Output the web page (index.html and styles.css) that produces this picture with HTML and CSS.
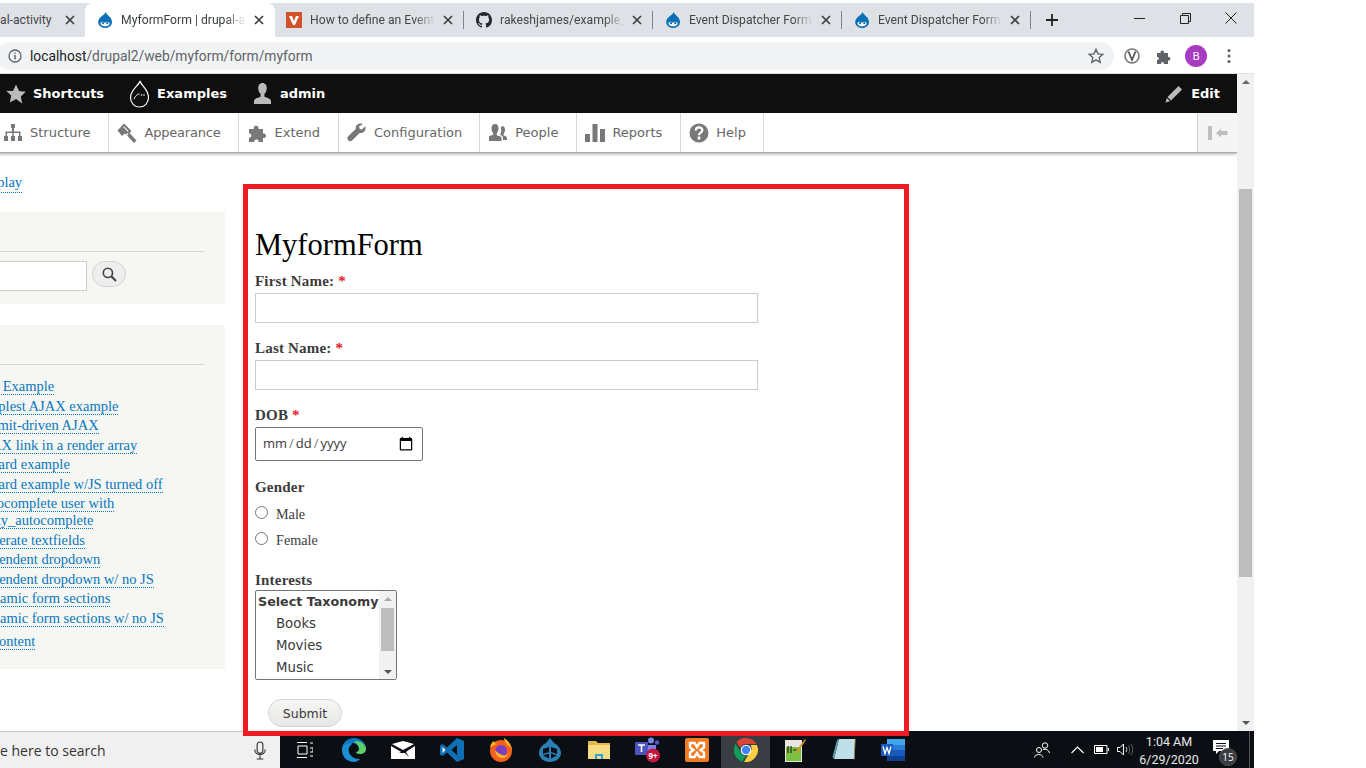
FILE: index.html
```html
<!DOCTYPE html>
<html lang="en">
<head>
  <meta charset="UTF-8" />
  <title>MyformForm | drupal-activity</title>
  <link rel="stylesheet" href="styles.css">
</head>
<body>

  <svg class="defs" width="0" height="0">
    <symbol id="drupal" viewBox="0 0 16 16">
      <path fill="#0d6fb5" d="M8.6 0c.5 2.8 6.4 4.9 6.4 10 0 3.500-3 6-6.800 6S1.200 13.500 1.200 10C1.200 5 8 3 8.600 0z"/>
      <path fill="#fff" d="M3.600 10.800c1-1.300 2.600-1.300 4.400 0 1.700-1.300 3.300-1.400 4.500 0 .6 1.900-1.600 3.600-4.400 3.600s-5-1.700-4.500-3.600z"/>
      <circle cx="6" cy="11.200" r="1.100" fill="#0d6fb5"/>
      <circle cx="10.300" cy="11.200" r="1.100" fill="#0d6fb5"/>
    </symbol>
    <symbol id="close" viewBox="0 0 10 10">
      <path d="M1 1l8 8M9 1l-8 8" stroke="#3c4043" stroke-width="1.700" fill="none"/>
    </symbol>
  </svg>

  <div class="window">

    <!-- Chrome tabs -->
    <div class="tabstrip">
      <div class="tab tab-first">
        <span class="tab-title">al-activity</span>
        <svg class="tab-close"><use href="#close"/></svg>
      </div>
      <div class="tab tab-active">
        <svg class="favicon"><use href="#drupal"/></svg>
        <span class="tab-title">MyformForm | drupal-a</span>
        <svg class="tab-close"><use href="#close"/></svg>
      </div>
      <div class="tab tab-event">
        <svg class="favicon" viewBox="0 0 16 16"><rect width="16" height="16" fill="#d2532a"/><path fill="#fff" d="M3 4h3l2 5 2-5h3l-4 9H7z"/></svg>
        <span class="tab-title">How to define an Event,</span>
        <svg class="tab-close"><use href="#close"/></svg>
      </div>
      <div class="tab">
        <svg class="favicon" viewBox="0 0 16 16"><path fill="#24292e" fill-rule="evenodd" d="M8 0C3.580 0 0 3.580 0 8c0 3.540 2.290 6.530 5.470 7.590.4.070.55-.17.55-.38 0-.19-.01-.82-.01-1.490-2.010.370-2.530-.49-2.690-.94-.09-.23-.48-.94-.82-1.130-.28-.15-.68-.52-.01-.53.63-.01 1.080.58 1.230.82.720 1.210 1.870.870 2.330.66.070-.52.280-.87.510-1.070-1.780-.2-3.640-.89-3.640-3.950 0-.87.310-1.590.820-2.150-.08-.2-.36-1.020.08-2.120 0 0 .67-.21 2.200.82.640-.18 1.320-.27 2-.27s1.360.09 2 .27c1.530-1.040 2.200-.82 2.200-.82.440 1.100.16 1.920.08 2.120.51.560.82 1.270.82 2.150 0 3.070-1.870 3.750-3.650 3.950.29.250.54.730.54 1.480 0 1.070-.01 1.930-.01 2.200 0 .21.150.46.550.38A8.010 8.010 0 0 0 16 8c0-4.420-3.580-8-8-8z"/></svg>
        <span class="tab-title">rakeshjames/example_e</span>
        <svg class="tab-close"><use href="#close"/></svg>
      </div>
      <div class="tab">
        <svg class="favicon"><use href="#drupal"/></svg>
        <span class="tab-title">Event Dispatcher Form |</span>
        <svg class="tab-close"><use href="#close"/></svg>
      </div>
      <div class="tab">
        <svg class="favicon"><use href="#drupal"/></svg>
        <span class="tab-title">Event Dispatcher Form |</span>
        <svg class="tab-close"><use href="#close"/></svg>
      </div>
      <svg class="new-tab" viewBox="0 0 12 12"><path d="M6 0v12M0 6h12" stroke="#202124" stroke-width="1.800"/></svg>
      <div class="win-controls">
        <span class="win-btn"><svg width="11" height="11" viewBox="0 0 11 11"><path d="M0 5.500h11" stroke="#222"/></svg></span>
        <span class="win-btn"><svg width="11" height="11" viewBox="0 0 11 11"><path d="M.5 2.500h8v8h-8zM2.500 2.500v-2h8v8h-2" stroke="#222" fill="none"/></svg></span>
        <span class="win-btn"><svg width="12" height="12" viewBox="0 0 12 12"><path d="M.5.500l11 11M11.500.500l-11 11" stroke="#222" fill="none"/></svg></span>
      </div>
    </div>

    <!-- Address bar -->
    <div class="addressbar">
      <div class="omnibox">
        <svg class="info-icon" viewBox="0 0 14 14"><circle cx="7" cy="7" r="6" fill="none" stroke="#5f6368" stroke-width="1.300"/><path d="M7 6v4.500M7 3.500v1.300" stroke="#5f6368" stroke-width="1.500"/></svg>
        <span class="url"><span class="url-host">localhost</span>/drupal2/web/myform/form/myform</span>
        <svg class="star-icon" viewBox="0 0 16 16"><path d="M8 1.500l2 4.400 4.700.5-3.500 3.200 1 4.700L8 11.900l-4.200 2.400 1-4.700L1.300 6.400 6 5.900z" fill="none" stroke="#5f6368" stroke-width="1.400"/></svg>
      </div>
      <svg class="ext-icon ext-v" viewBox="0 0 16 16"><circle cx="8" cy="8" r="7" fill="none" stroke="#777" stroke-width="1.600"/><path d="M4.500 3.500L8 12l3.500-8.500" fill="none" stroke="#555" stroke-width="1.800"/></svg>
      <svg class="ext-icon ext-puzzle" viewBox="0 0 16 16"><path fill="#5f6368" d="M1 5h3.500c-.8-3 4-3.500 3.500 0H12v4c3-.8 3.500 4 0 3.500V16H8c.5-2.800-3.500-2.800-3 0H1v-4c2.500.5 2.500-3.500 0-3z"/></svg>
      <span class="avatar">B</span>
      <svg class="ext-icon ext-dots" viewBox="0 0 4 16"><circle cx="2" cy="2.500" r="1.500" fill="#5f6368"/><circle cx="2" cy="8" r="1.500" fill="#5f6368"/><circle cx="2" cy="13.500" r="1.500" fill="#5f6368"/></svg>
    </div>

    <div class="browser-body">
      <div class="viewport">

        <!-- Drupal admin toolbar -->
        <div class="toolbar">
          <a class="toolbar-link link-shortcuts"><svg viewBox="0 0 20 20"><path fill="#bbb" d="M10 .5l3 6.500 6.800.8-5 4.700 1.300 6.900L10 15.100l-6.100 3.300 1.300-6.900-5-4.700L7 7z"/></svg>Shortcuts</a>
          <a class="toolbar-link link-examples"><svg viewBox="0 0 20 28"><path fill="none" stroke="#fff" stroke-width="1.200" d="M10.500 1c1 4.500 8.500 8 8.500 16.500 0 5.500-4 9.500-9 9.500s-9-4-9-9.500C1 9.500 9.500 5.500 10.500 1z"/><path fill="none" stroke="#fff" d="M4.500 19c2-4 4-5 5.500-5"/><circle cx="12" cy="15" r=".8" fill="#fff"/><circle cx="14.500" cy="15" r=".8" fill="#fff"/></svg>Examples</a>
          <a class="toolbar-link link-admin"><svg viewBox="0 0 20 22"><path fill="#bbb" d="M10 0c3 0 4.500 2.500 4.500 5.500 0 3-1.300 5-2.500 6v3c2 1 7 1.500 7 5v2.500H1V19.500c0-3.500 5-4 7-5v-3c-1.200-1-2.500-3-2.500-6C5.500 2.500 7 0 10 0z"/></svg>admin</a>
          <a class="toolbar-link link-edit"><svg viewBox="0 0 18 18"><path fill="#bbb" d="M13.500 1l3.500 3.500L6 15.500 2.500 12zM1.800 13L5 16.200.5 17.500z"/></svg>Edit</a>
        </div>

        <!-- Admin menu tray -->
        <div class="tray">
          <a class="tray-item tray-structure"><svg viewBox="0 0 20 20"><path fill="#787878" d="M8 1h4v4h-1v3.500h6.500V13H19v5h-4v-5h1V10h-5.300v3H12v5H8v-5h1.300v-3H4v3h1v5H1v-5h1.500V8.500H9V5H8z"/></svg>Structure</a>
          <a class="tray-item tray-appearance"><svg viewBox="0 0 20 20"><path fill="#787878" d="M7 .5L14.500 8l-3 3-1-1-1.500 1.500-1-1L5 13 .5 7.500zM10 12.500l2.500-2.500 7 7.500-2.500 2.500z"/><path fill="#fff" d="M6.800 3.300l4.800 4.700-.7.700-4.800-4.700z"/></svg>Appearance</a>
          <a class="tray-item tray-extend"><svg viewBox="0 0 20 20"><path fill="#787878" d="M1 6h5c-1.500-4 5.500-4.500 4.500 0H15v4.500c4-1 4 5.500 0 4.500v4h-4.500c.8-3.500-5-3.500-4 0H1v-4.500c3 1 3-5 0-4z"/></svg>Extend</a>
          <a class="tray-item"><svg viewBox="0 0 20 20"><path fill="#787878" d="M13.500.5c-3 0-5.300 2.600-4.800 5.500L1 13.500c-1.200 1.200-.6 2.800.2 3.800.9 1 2.800 1.500 3.900.3l7.500-7.700c3 .6 6-1.700 6-5 0-.7-.1-1.200-.3-1.700L15 6.500 12.800 6 12 3.500 15.800.9c-.7-.3-1.500-.4-2.300-.4z"/></svg>Configuration</a>
          <a class="tray-item tray-wide"><svg viewBox="0 0 20 20"><path fill="#787878" d="M7 1c2.500 0 3.500 2 3.500 4.500 0 2-.8 3.800-1.700 4.700v2c1.500.5 3.700 1 4.700 2V18H1v-4c0-1.500 3.500-1.800 4.200-2.500v-1.300C4.300 9.300 3.500 7.500 3.500 5.500 3.500 3 4.500 1 7 1z"/><path fill="#787878" d="M14 3c2.200 0 3 1.700 3 3.700 0 1.700-.6 3.200-1.400 4v1.800c1.200.4 3.400.8 3.400 2.500v2h-4v-2.500c0-1.500-2-2.300-3-2.700.7-1.300 1.200-2.800 1.200-4.300 0-1-.1-2-.5-3 .2-.3.500-.5.800-.5z"/></svg>People</a>
          <a class="tray-item tray-wide"><svg viewBox="0 0 20 20"><path fill="#787878" d="M0 11h5v8H0zM7.500 1h5v18h-5zM15 6h5v13h-5z"/></svg>Reports</a>
          <a class="tray-item"><svg viewBox="0 0 20 20"><circle cx="10" cy="10" r="9.500" fill="#787878"/><path d="M6.800 7.500c0-4 6.500-4 6.500-.3 0 2.500-3.300 2.500-3.300 5" fill="none" stroke="#fff" stroke-width="2.300"/><path d="M10 13.500v3" stroke="#fff" stroke-width="2.500"/></svg>Help</a>
          <a class="tray-collapse"><svg viewBox="0 0 20 14"><path fill="#bfbfbf" d="M0 0h4v14H0zM8 7l5-4.500V5h6.500v4H13v2.500z"/></svg></a>
        </div>

        <div class="page">
          <aside class="sidebar">
            <a class="display-link" href="#">Display</a>

            <div class="panel panel-search">
              <div class="panel-head"></div>
              <div class="search-row">
                <input class="search-input" type="text">
                <button class="search-btn" type="button"><svg viewBox="0 0 14 14"><circle cx="5.500" cy="5.500" r="4.300" fill="none" stroke="#444" stroke-width="1.500"/><path d="M8.700 8.700l4.300 4.300" stroke="#444" stroke-width="2"/></svg></button>
              </div>
            </div>

            <div class="panel panel-menu">
              <div class="panel-head"></div>
              <ul class="menu">
                <li class="menu-top"><a href="#">AJAX Example</a></li>
                <li><a href="#">Simplest AJAX example</a></li>
                <li><a href="#">Submit-driven AJAX</a></li>
                <li><a href="#">AJAX link in a render array</a></li>
                <li><a href="#">Wizard example</a></li>
                <li><a href="#">Wizard example w/JS turned off</a></li>
                <li><a href="#">Autocomplete user with entity_autocomplete</a></li>
                <li><a href="#">Generate textfields</a></li>
                <li><a href="#">Dependent dropdown</a></li>
                <li><a href="#">Dependent dropdown w/ no JS</a></li>
                <li><a href="#">Dynamic form sections</a></li>
                <li><a href="#">Dynamic form sections w/ no JS</a></li>
                <li class="menu-last"><a href="#">Add content</a></li>
              </ul>
            </div>
          </aside>

          <form class="myform">
            <h1>MyformForm</h1>

            <label class="field-label">First Name: <span class="req">*</span></label>
            <input class="text-input" type="text">

            <label class="field-label">Last Name: <span class="req">*</span></label>
            <input class="text-input" type="text">

            <label class="field-label">DOB <span class="req">*</span></label>
            <input class="date-input" type="date">

            <label class="field-label">Gender</label>
            <div class="radios">
              <label class="radio-row"><input type="radio" name="gender">Male</label>
              <label class="radio-row"><input type="radio" name="gender">Female</label>
            </div>

            <label class="field-label label-interests">Interests</label>
            <div class="taxonomy" role="listbox">
              <div class="taxonomy-rows">
                <div class="taxonomy-group">Select Taxonomy</div>
                <div class="taxonomy-option">Books</div>
                <div class="taxonomy-option">Movies</div>
                <div class="taxonomy-option">Music</div>
              </div>
              <div class="taxonomy-scroll">
                <span class="arrow-up"></span>
                <div class="taxonomy-thumb"></div>
                <span class="arrow-down"></span>
              </div>
            </div>

            <button class="submit-btn" type="button">Submit</button>
          </form>
        </div>
      </div>

      <!-- Page scrollbar -->
      <div class="scrollbar">
        <span class="arrow-up"></span>
        <div class="scroll-track"><div class="scroll-thumb"></div></div>
        <span class="arrow-down"></span>
      </div>
    </div>

    <!-- Windows taskbar -->
    <div class="taskbar">
      <div class="task-search">
        <span class="task-search-text">e here to search</span>
        <svg class="mic" viewBox="0 0 14 20"><rect x="4" y="1" width="6" height="12" rx="3" fill="none" stroke="#333" stroke-width="1.200"/><path d="M1.500 9c0 7 11 7 11 0M7 15v3.500M3.500 19h7" fill="none" stroke="#333" stroke-width="1.200"/></svg>
      </div>

      <span class="task-icon"><svg width="16" height="16" viewBox="0 0 16 16"><path d="M0 .5h10M0 15.500h10M1 4h9v8H1zM13 1h3M13 6h3v4h-3M13 14h3" fill="none" stroke="#fff"/></svg></span>
      <span class="task-icon"><svg width="24" height="24" viewBox="0 0 24 24"><path fill="#0f7ac4" d="M12 0c7 0 12 5 12 11 0 3-3 5-6 5-2 0-4-1-4-2 2 0 3-1 3-3 0-3-3-6-7-6C4 5 0 9 0 12 0 5 5 0 12 0z"/><path fill="#1a8fd6" d="M0 12c0-4 4-7 8-7 3 0 2 1 1 2-2 2-3 4-2 7 1 4 5 7 10 7 1 0 1 .5 0 1-2 1-3 2-5 2C5 24 0 19 0 12z"/><path fill="#5fd068" d="M14 3c5 0 10 4 10 8 0 3-3 5-6 5-2 0-4-1-4-2 2 0 3-1 3-3 0-3-2-6-5-7z"/></svg></span>
      <span class="task-icon"><svg width="24" height="18" viewBox="0 0 24 18"><path fill="#fff" d="M0 5l12 7L24 5v13H0zM1 3L12 0l11 3-11 6z"/><path fill="#0b0f14" d="M8 12l15-7-8 6 3 5-4-4z"/></svg></span>
      <span class="task-icon"><svg width="24" height="24" viewBox="0 0 24 24"><path fill="#0f6eb4" d="M17 0l7 3v18l-7 3L7 14.500 2.500 18 0 16.500v-9L2.500 6 7 9.500zM17 7l-5.500 5 5.500 5z"/><path fill="#fff" d="M2.500 9v6L5.500 12z"/></svg></span>
      <span class="task-icon"><svg width="24" height="24" viewBox="0 0 24 24"><circle cx="12" cy="13" r="11" fill="#f4601e"/><path fill="#ffb726" d="M15 0c5 3 8 8 8 13 0-3-3-6-5-6-1-3-3-4-3-7zM1 10c0-3 2-6 4-7 0 2 2 3 3 3-3 1-6 2-7 4z"/><circle cx="12" cy="13" r="6" fill="#7b3fbf"/><path fill="#ffb726" d="M6 12c0 4 3 8 7 8 3 0 6-2 7-5-2 2-4 3-7 2-3-1-5-3-7-5z"/></svg></span>
      <span class="task-icon"><svg width="22" height="24" viewBox="0 0 22 24"><path fill="#2a7fb5" d="M11 0l4 5c4 2 7 6 7 10 0 5-5 9-11 9S0 20 0 15c0-4 3-8 7-10z"/><path fill="#0b0f14" d="M4 11l6-2v5l-6 2zM12 9l6 2v5l-6-2zM4 17.500l6-2v5zM12 15.500l6 2-6 3z"/></svg></span>
      <span class="task-icon"><svg width="22" height="18" viewBox="0 0 22 18"><path fill="#e0b94a" d="M0 0h8l2 2h12v3H0z"/><path fill="#f6dc82" d="M0 4h22v14H0z"/><path fill="#2aa3dc" d="M7 18v-5h8v5h-2v-3H9v3z"/></svg></span>
      <span class="task-icon"><svg class="teams" width="26" height="26" viewBox="0 0 26 26"><circle cx="16" cy="3.500" r="3" fill="#7b83eb"/><circle cx="22" cy="5.500" r="2.200" fill="#5059c9"/><path fill="#7b83eb" d="M11 8h10v9H11z"/><rect y="5" width="13" height="13" rx="1" fill="#4b53bc"/><path d="M3 8h7M6.500 8v7" stroke="#fff" stroke-width="1.600"/><circle cx="18" cy="18.500" r="7" fill="#c4163f"/><text x="18" y="22" text-anchor="middle" class="teams-badge">9+</text></svg></span>
      <span class="task-icon"><svg width="24" height="24" viewBox="0 0 24 24"><rect width="24" height="24" rx="2" fill="#ee7c25"/><path fill="none" stroke="#fff" stroke-width="2.400" d="M5 5h4.500l2.500 4 2.500-4H19v4.500L15.500 12l3.500 2.500V19h-4.500L12 15l-2.500 4H5v-4.500L8.500 12 5 9.500z"/></svg></span>
      <span class="task-icon task-active"><svg width="24" height="24" viewBox="0 0 24 24"><path fill="#db4437" d="M12 0a12 12 0 0 1 10.400 6H12a6 6 0 0 0-5.700 4L2.500 4A12 12 0 0 1 12 0z"/><path fill="#0f9d58" d="M1.600 5.800l5.300 9A6 6 0 0 0 12 18l-3.700 5.500A12 12 0 0 1 1.600 5.800z"/><path fill="#ffcd40" d="M22.800 7A12 12 0 0 1 10 23.900L15.700 14.500A6 6 0 0 0 16.500 7z"/><circle cx="12" cy="12" r="5.300" fill="#fff"/><circle cx="12" cy="12" r="4.200" fill="#4285f4"/></svg></span>
      <span class="task-icon"><svg width="22" height="24" viewBox="0 0 22 24"><path fill="#e8e8e0" d="M1 2h17v22H1z"/><path fill="#7ac143" d="M2 9h15v14H2z"/><path d="M4 8v7M7 8v7M9 12h5" stroke="#222" stroke-width="1.200"/><path d="M21 1l1 1-9 13-2 1 .5-2.500z" fill="#d99a2b"/></svg></span>
      <span class="task-icon"><svg width="24" height="24" viewBox="0 0 24 24"><path fill="#bfe0e8" d="M7 1h16l-1 20H2z"/><path fill="#5e9fb5" d="M7 1L2 21l-1.500-2L5 2z"/><path fill="#d9a85a" d="M23 1l.5 1-1 20-.5-1z"/></svg></span>
      <span class="task-icon"><svg width="24" height="22" viewBox="0 0 24 22"><rect x="6" width="18" height="22" rx="1" fill="#2b7cd3"/><path fill="#41a5ee" d="M6 0h18v6H6z"/><path fill="#185abd" d="M6 11h18v6H6z"/><path fill="#103f91" d="M6 17h18v5H6z"/><rect y="5" width="12" height="12" fill="#185abd"/><path d="M2 7.500l2 7 2-6 2 6 2-7" fill="none" stroke="#fff" stroke-width="1.300"/></svg></span>

      <div class="systray">
        <svg width="16" height="16" viewBox="0 0 16 16"><circle cx="5" cy="8" r="2.500" fill="none" stroke="#fff"/><path d="M.5 15.500c.3-4 8-4 8.500 0" fill="none" stroke="#fff"/><circle cx="11" cy="3.500" r="2.700" fill="none" stroke="#fff"/><path d="M9 7.500c3-.8 6 .5 6.500 3.500" fill="none" stroke="#fff"/></svg>
        <svg class="tray-chevron" width="13" height="8" viewBox="0 0 13 8"><path d="M.5 7l6-6 6 6" fill="none" stroke="#fff" stroke-width="1.100"/></svg>
        <svg class="tray-battery" width="15" height="9" viewBox="0 0 15 9"><path d="M.5.500h12.500v8H.5z" fill="none" stroke="#fff"/><path d="M2 2h7v5H2z" fill="#fff"/><path d="M14 3h1v3h-1z" fill="#fff"/></svg>
        <svg class="tray-volume" width="16" height="13" viewBox="0 0 16 13"><path d="M.5 4.500h2.500L6.500 1v11L3 8.500H.5z" fill="none" stroke="#fff"/><path d="M9 4c1 1.500 1 3.500 0 5" fill="none" stroke="#ccc"/><path d="M11.500 2.500c1.600 2.500 1.600 5.500 0 8M14 1c2.300 3.500 2.300 7.500 0 11" fill="none" stroke="#666"/></svg>
        <div class="clock"><div>1:04 AM</div><div>6/29/2020</div></div>
        <div class="notify">
          <svg width="16" height="15" viewBox="0 0 16 15"><path fill="#fff" d="M0 0h16v11H6l-3 3v-3H0z"/><path d="M3 3.500h10M3 6h10M3 8.500h7" stroke="#0b0f14"/></svg>
          <span class="notify-badge">15</span>
        </div>
        <span class="desktop-edge"></span>
      </div>
    </div>
  </div>

  <!-- Red highlight drawn over the screenshot -->
  <div class="highlight"></div>

</body>
</html>
```

FILE: styles.css
```css
* {
  box-sizing: border-box;
}

body {
  margin: 0;
  background: #fff;
  height: 768px;
  overflow: hidden;
  position: relative;
  font-family: 'Liberation Serif', serif;
}

.defs {
  position: absolute;
}

.window {
  width: 1254px;
  height: 768px;
  display: flex;
  flex-direction: column;
}

/* Chrome tabs */

.tabstrip {
  margin-top: 3px;
  height: 34px;
  background: #dee1e6;
  display: flex;
  align-items: stretch;
  font-family: Roboto, sans-serif;
  font-size: 12.200px;
  color: #45474a;
  flex-shrink: 0;
}

.tab {
  width: 189px;
  display: flex;
  align-items: center;
  padding: 0 7px 0 12px;
  position: relative;
  flex-shrink: 0;
}

.tab::after {
  content: "";
  position: absolute;
  right: 0;
  top: 8px;
  bottom: 8px;
  width: 1px;
  background: #80868b;
}

.tab-first {
  width: 85px;
  padding: 0 6px 0 0;
}

.tab-first::after {
  display: none;
}

.tab-active {
  width: 190px;
  background: #fff;
  border-radius: 8px 8px 0 0;
  color: #3c4043;
}

.tab-active::after {
  display: none;
}

.tab-event {
  padding-left: 11px;
}

.favicon {
  width: 16px;
  height: 16px;
  flex-shrink: 0;
  margin-right: 8px;
}

.tab-title {
  flex: 1;
  min-width: 0;
  white-space: nowrap;
  -webkit-mask-image: linear-gradient(to right, #000 84%, transparent);
}

.tab-first .tab-title {
  -webkit-mask-image: none;
}

.tab-close {
  width: 10px;
  height: 10px;
  flex-shrink: 0;
  margin: 0 4px 0 8px;
}

.new-tab {
  width: 12px;
  height: 12px;
  margin: 11px 0 0 15px;
}

.win-controls {
  margin-left: auto;
  display: flex;
}

.win-btn {
  width: 46px;
  height: 30px;
  display: flex;
  align-items: center;
  justify-content: center;
}

/* Address bar */

.addressbar {
  height: 37px;
  background: #fff;
  border-bottom: 1px solid #e0e0e0;
  display: flex;
  align-items: center;
  position: relative;
  padding-top: 1px;
  flex-shrink: 0;
}

.omnibox {
  width: 1118px;
  margin-left: -4px;
  height: 28px;
  background: #f1f3f4;
  border-radius: 14px;
  display: flex;
  align-items: center;
  padding: 0 10px 0 12px;
  font-family: Roboto, sans-serif;
  font-size: 13.800px;
  color: #5f6368;
  flex-shrink: 0;
}

.info-icon {
  width: 14px;
  height: 14px;
  margin-right: 8px;
}

.url {
  flex: 1;
}

.url-host {
  color: #202124;
}

.star-icon {
  width: 16px;
  height: 16px;
}

.ext-icon {
  height: 16px;
  width: 16px;
  flex-shrink: 0;
}

.ext-v {
  margin-left: 10px;
}

.ext-puzzle {
  margin-left: 16px;
}

.avatar {
  width: 22px;
  height: 22px;
  margin-left: 13px;
  border-radius: 50%;
  background: #a93bc0;
  color: #fff;
  font: 11px 'Noto Sans', sans-serif;
  display: flex;
  align-items: center;
  justify-content: center;
  flex-shrink: 0;
}

.ext-dots {
  width: 4px;
  margin-left: 20px;
}

/* Page area */

.browser-body {
  flex: 1;
  display: flex;
  min-height: 0;
}

.viewport {
  width: 1237px;
  overflow: hidden;
  display: flex;
  flex-direction: column;
}

.toolbar {
  height: 39px;
  background: #0f0f0f;
  display: flex;
  align-items: center;
  font: bold 13px 'DejaVu Sans', sans-serif;
  color: #fff;
  flex-shrink: 0;
}

.toolbar-link {
  display: flex;
  align-items: center;
}

.link-shortcuts {
  margin-left: 6px;
}

.link-shortcuts svg {
  width: 20px;
  height: 20px;
  margin-right: 7px;
}

.link-examples {
  margin-left: 25px;
}

.link-examples svg {
  width: 21px;
  height: 28px;
  margin-right: 7px;
}

.link-admin {
  margin-left: 26px;
}

.link-admin svg {
  width: 19px;
  height: 21px;
  margin-right: 8px;
}

.link-edit {
  margin-left: auto;
  margin-right: 17px;
}

.link-edit svg {
  width: 18px;
  height: 18px;
  margin-right: 8px;
}

.tray {
  height: 40px;
  background: #fff;
  border-bottom: 1px solid #aaa;
  box-shadow: 0 1px 3px rgba(0,0,0,0.35);
  display: flex;
  margin-left: -4px;
  font: 13px 'DejaVu Sans', sans-serif;
  color: #666;
  position: relative;
  flex-shrink: 0;
}

.tray-item {
  display: flex;
  align-items: center;
  padding: 0 17px 0 8px;
  border-right: 1px solid #d8d8d8;
}

.tray-item svg {
  width: 20px;
  height: 20px;
  margin-right: 7px;
}

.tray-structure {
  padding: 0 18px 0 7px;
}

.tray-appearance {
  letter-spacing: -0.2px;
}

.tray-extend {
  padding: 0 18px 0 9px;
}

.tray-wide {
  padding-right: 18px;
}

.tray-collapse {
  margin-left: auto;
  width: 40px;
  border-left: 1px solid #d0d0d0;
  background: #f5f5f5;
  display: flex;
  align-items: center;
  justify-content: center;
}

.tray-collapse svg {
  width: 20px;
  height: 14px;
}

.page {
  flex: 1;
  display: flex;
  min-height: 0;
}

/* Sidebar, scrolled partly off the left edge */

.sidebar {
  width: 225px;
  flex-shrink: 0;
  overflow: hidden;
  padding-top: 20px;
  font-size: 14.500px;
}

.sidebar a {
  color: #0678be;
  text-decoration: none;
  border-bottom: 1px dotted #0678be;
}

.display-link {
  display: inline-block;
  margin-left: -23px;
  line-height: 19px;
  margin-bottom: 19px;
}

.panel {
  background: #f6f6f2;
  padding-right: 21px;
}

.panel-head {
  height: 40px;
  border-bottom: 1px solid #d6d6d6;
}

.panel-search {
  height: 92px;
  margin-bottom: 21px;
}

.search-row {
  display: flex;
  margin-top: 9px;
  align-items: flex-start;
}

.search-input {
  width: 87px;
  height: 30px;
  border: 1px solid #ccc;
  border-left: 0;
  background: #fff;
}

.search-btn {
  width: 34px;
  height: 26px;
  margin-left: 5px;
  border-radius: 13px;
  border: 1px solid #d4d4d4;
  background: #eeeeee;
  padding: 0;
  display: flex;
  align-items: center;
  justify-content: center;
}

.search-btn svg {
  width: 15px;
  height: 15px;
}

.panel-menu {
  height: 344px;
}

.menu {
  list-style: none;
  margin: 12px 0 0 -25px;
  padding: 0;
  line-height: 17px;
}

.menu li {
  padding: 1.250px 0;
}

.menu-top {
  margin-left: -13px;
}

.menu .menu-last {
  margin-top: 4px;
  margin-left: -11px;
}

/* Form */

.myform {
  margin-left: 30px;
  padding-top: 74px;
  display: flex;
  flex-direction: column;
  align-items: flex-start;
  color: #3b3b3b;
  font-size: 14px;
}

h1 {
  font-weight: normal;
  font-size: 30.500px;
  line-height: 36px;
  margin: 0 0 10px;
  color: #000;
}

.field-label {
  font-weight: bold;
  font-size: 15px;
  letter-spacing: 0.2px;
  line-height: 17px;
  margin-bottom: 3px;
}

.req {
  color: #e0202a;
}

.text-input {
  width: 503px;
  height: 30px;
  border: 1px solid #ccc;
  background: #fff;
  margin-bottom: 17px;
}

.date-input {
  width: 168px;
  height: 34px;
  border: 1px solid #767676;
  border-radius: 2px;
  padding: 0 6px 2px;
  font: 13px 'Open Sans', sans-serif;
  color: #3b3b3b;
  background: #fff;
  margin-bottom: 18px;
}

.date-input::-webkit-datetime-edit-text {
  padding: 0 1px;
  color: #777;
}

.date-input::-webkit-calendar-picker-indicator {
  width: 16px;
  height: 16px;
  margin: 2px 2px 0 0;
  padding: 0;
}

.radios {
  margin-top: 2px;
  margin-bottom: 19px;
}

.radio-row {
  display: flex;
  align-items: center;
  height: 26px;
  font-size: 14.200px;
}

.radio-row input {
  width: 13px;
  height: 13px;
  margin: 0 8px 0 0;
  position: relative;
  top: -2px;
}

.label-interests {
  margin-bottom: 1px;
}

/* Listbox, drawn by hand so that its scrollbar shows */

.taxonomy {
  width: 142px;
  height: 90px;
  border: 1px solid #767676;
  border-radius: 2px;
  font: 13.300px/22px 'DejaVu Sans', sans-serif;
  color: #3b3b3b;
  background: #fff;
  display: flex;
  overflow: hidden;
}

.taxonomy-rows {
  flex: 1;
  white-space: nowrap;
  min-width: 0;
}

.taxonomy-group {
  font-weight: bold;
  font-size: 12.700px;
  padding-left: 2px;
}

.taxonomy-option {
  padding-left: 20px;
}

.taxonomy-scroll {
  width: 17px;
  background: #f1f1f1;
  display: flex;
  flex-direction: column;
  align-items: center;
  padding: 6px 0 5px;
  flex-shrink: 0;
}

.taxonomy-thumb {
  width: 13px;
  height: 43px;
  background: #bdbdbd;
  margin-top: 7px;
  margin-bottom: auto;
}

.taxonomy-scroll .arrow-up {
  border-bottom-color: #aaa;
  margin-top: 0;
}

.taxonomy-scroll .arrow-down {
  margin-bottom: 0;
}

.submit-btn {
  margin: 19px 0 0 13px;
  width: 74px;
  height: 28px;
  border: 1px solid #d4d4d4;
  border-radius: 14px;
  background: linear-gradient(#f6f6f3, #e7e7e7);
  font: 12.500px 'DejaVu Sans', sans-serif;
  color: #3a3a3a;
  padding: 0;
}

/* Page scrollbar */

.scrollbar {
  width: 17px;
  background: #f1f1f1;
  display: flex;
  flex-direction: column;
  align-items: center;
}

.scroll-track {
  flex: 1;
  width: 100%;
  padding: 105px 2px 0 2px;
}

.scroll-thumb {
  height: 388px;
  background: #bdbdbd;
}

.arrow-up,
.arrow-down {
  width: 0;
  height: 0;
  border-left: 4px solid transparent;
  border-right: 4px solid transparent;
}

.arrow-up {
  border-bottom: 4px solid #666;
  margin-top: 6px;
}

.arrow-down {
  border-top: 4px solid #555;
  margin-bottom: 6px;
}

/* Taskbar */

.taskbar {
  height: 37px;
  background: #0b0f14;
  display: flex;
  align-items: center;
  color: #fff;
  flex-shrink: 0;
}

.task-search {
  width: 280px;
  height: 100%;
  background: #f0f0f0;
  border-top: 1px solid #c4c4c4;
  display: flex;
  align-items: center;
  justify-content: space-between;
  padding: 1px 13px 0 0;
  color: #333;
  font: 14px 'Open Sans', sans-serif;
  flex-shrink: 0;
}

.mic {
  width: 14px;
  height: 19px;
}

.task-icon {
  width: 49px;
  height: 100%;
  display: flex;
  align-items: center;
  justify-content: center;
  flex-shrink: 0;
}

.task-active {
  background: #3a3d41;
}

.teams-badge {
  font: bold 8px 'Open Sans', sans-serif;
  fill: #fff;
}

.systray {
  margin-left: auto;
  display: flex;
  align-items: center;
  height: 100%;
}

.tray-chevron {
  margin-left: 21px;
}

.tray-battery {
  margin-left: 10px;
}

.tray-volume {
  margin-left: 8px;
}

.clock {
  margin-left: 6px;
  width: 60px;
  padding-top: 2px;
  text-align: center;
  font: 12.500px/18px Roboto, sans-serif;
  color: #e8e8e8;
  white-space: nowrap;
}

.notify {
  width: 30px;
  margin-left: 10px;
  margin-right: 10px;
  position: relative;
  height: 100%;
  display: flex;
  align-items: center;
}

.notify svg {
  margin: 0 0 4px 4px;
}

.notify-badge {
  position: absolute;
  right: 2px;
  bottom: 2px;
  width: 18px;
  height: 18px;
  border-radius: 50%;
  background: #3a3d41;
  border: 1px solid #555;
  font: 10px/16px 'Open Sans', sans-serif;
  text-align: center;
}

.desktop-edge {
  width: 1px;
  height: 100%;
  background: #555;
  margin-right: 4px;
}

/* Red annotation */

.highlight {
  position: absolute;
  left: 243px;
  top: 184px;
  width: 666px;
  height: 552px;
  border: 5px solid #ed1c24;
  pointer-events: none;
}
```
